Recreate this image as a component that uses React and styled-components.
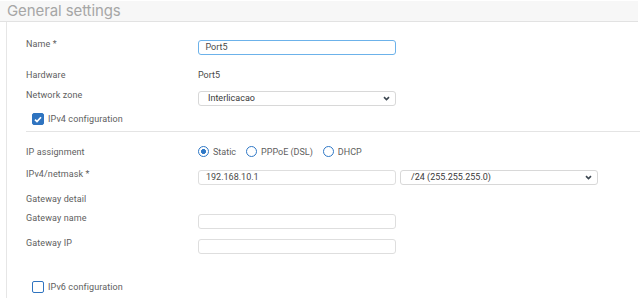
import React from 'react'
import styled, { createGlobalStyle } from 'styled-components'

const Global = createGlobalStyle`
  html, body { margin: 0; padding: 0; background: #fff; }
  body { font-family: Roboto, "Noto Sans", sans-serif; }
`

const Page = styled.div`
  width: 640px;
  height: 298px;
  overflow: hidden;
  padding-top: 1px;
  box-sizing: border-box;
`

const Header = styled.div`
  height: 20px;
  margin-right: 2px;
  background: #f7f7f7;
  border-bottom: 1px solid #e2e2e2;
  padding-left: 7px;
  font-family: Inter, sans-serif;
  font-size: 15px;
  line-height: 19px;
  color: #a6a6a6;
  letter-spacing: -0.1px;
`

const Card = styled.div`
  margin-left: 6px;
  border-left: 1px solid #e6e6e6;
  padding: 15px 0 0 19px;
  height: 290px;
`

const Row = styled.div`
  display: flex;
  align-items: flex-start;
  height: ${p => p.$h}px;
`

const Label = styled.div`
  width: 172px;
  flex: none;
  font-size: 9px;
  line-height: 14px;
  color: #5e5e5e;
  letter-spacing: 0.1px;
`

const Value = styled.div`
  font-size: 9px;
  line-height: 14px;
  color: #4a4a4a;
`

const Controls = styled.div`
  display: flex;
  gap: 4px;
  margin-top: ${p => (p.$flat ? 0 : 3)}px;
`

const Input = styled.div`
  box-sizing: border-box;
  width: ${p => p.$w || 198}px;
  height: 15px;
  border: ${p => (p.$focus ? '1.5px solid #6cb2ea' : '1px solid #dedede')};
  border-radius: 3px;
  padding-left: ${p => (p.$focus ? 6.5 : 7)}px;
  font-size: 9px;
  line-height: ${p => (p.$focus ? 12 : 13)}px;
  color: #4a4a4a;
  background: #fff;
`

const Select = styled(Input)`
  display: flex;
  align-items: center;
  justify-content: space-between;
  padding: 0 5px 0 ${p => p.$pad || 9}px;
  border-color: #d8d8d8;
  color: #3a3a3a;
  svg { flex: none; }
`

const Chevron = () => (
  <svg width="7" height="5" viewBox="0 0 7 5">
    <path d="M1 1.2 L3.5 3.6 L6 1.2" fill="none" stroke="#3c4650" strokeWidth="1.6" />
  </svg>
)

const CheckRow = styled.label`
  display: flex;
  align-items: center;
  gap: 4px;
  height: 14px;
  margin: 0 0 0 6px;
  font-size: 9px;
  color: #5e5e5e;
  letter-spacing: 0.1px;
`

const Box = styled.span`
  box-sizing: border-box;
  width: 12px;
  height: 12px;
  border-radius: 2px;
  border: 1.5px solid #2f74c0;
  background: ${p => (p.$on ? '#2f74c0' : '#fff')};
  display: flex;
  align-items: center;
  justify-content: center;
`

const Divider = styled.div`
  height: 1px;
  background: #e4e4e4;
  margin: 5px 0 13px;
`

const Radios = styled.div`
  display: flex;
  align-items: center;
  gap: 10px;
  margin-top: 1px;
`

const Radio = styled.span`
  display: flex;
  align-items: center;
  gap: 4px;
  font-size: 9px;
  color: #5e5e5e;
  &::before {
    content: '';
    box-sizing: border-box;
    width: 11px;
    height: 11px;
    border-radius: 50%;
    border: 1.6px solid #2f78c6;
    background: ${p => (p.$on ? 'radial-gradient(circle, #2f78c6 0 2.2px, #fff 2.7px)' : '#fff')};
  }
`

export default function App() {
  return (
    <Page>
      <Global />
      <Header>General settings</Header>
      <Card>
        <Row $h={31}>
          <Label>Name *</Label>
          <Controls><Input $focus>Port5</Input></Controls>
        </Row>
        <Row $h={20}>
          <Label>Hardware</Label>
          <Controls $flat><Value>Port5</Value></Controls>
        </Row>
        <Row $h={24}>
          <Label>Network zone</Label>
          <Controls><Select>Interlicacao<Chevron /></Select></Controls>
        </Row>
        <CheckRow>
          <Box $on>
            <svg width="8" height="7" viewBox="0 0 8 7">
              <path d="M1 3.6 L3 5.6 L7 1.2" fill="none" stroke="#fff" strokeWidth="1.7" />
            </svg>
          </Box>
          IPv4 configuration
        </CheckRow>
        <Divider />
        <Row $h={22}>
          <Label>IP assignment</Label>
          <Radios>
            <Radio $on>Static</Radio>
            <Radio>PPPoE (DSL)</Radio>
            <Radio>DHCP</Radio>
          </Radios>
        </Row>
        <Row $h={25}>
          <Label>IPv4/netmask *</Label>
          <Controls>
            <Input>192.168.10.1</Input>
            <Select $pad={10}>/24 (255.255.255.0)<Chevron /></Select>
          </Controls>
        </Row>
        <Row $h={19}>
          <Label>Gateway detail</Label>
        </Row>
        <Row $h={25}>
          <Label>Gateway name</Label>
          <Controls><Input /></Controls>
        </Row>
        <Row $h={44}>
          <Label>Gateway IP</Label>
          <Controls><Input /></Controls>
        </Row>
        <CheckRow>
          <Box />
          IPv6 configuration
        </CheckRow>
      </Card>
    </Page>
  )
}
